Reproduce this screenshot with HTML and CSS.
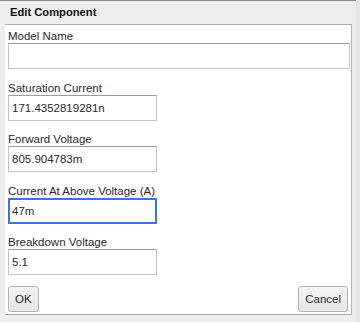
FILE: index.html
```html
<!DOCTYPE html>
<html>
<head>
<meta charset="utf-8">
<link rel="stylesheet" href="styles.css">
</head>
<body>
<div class="dialog">
  <div class="title">Edit Component</div>
  <div class="panel">
    <div class="field">
      <div class="label">Model Name</div>
      <input class="input wide" type="text" value="">
    </div>
    <div class="field">
      <div class="label">Saturation Current</div>
      <input class="input" type="text" value="171.4352819281n">
    </div>
    <div class="field">
      <div class="label">Forward Voltage</div>
      <input class="input" type="text" value="805.904783m">
    </div>
    <div class="field">
      <div class="label">Current At Above Voltage (A)</div>
      <input class="input focused" type="text" value="47m">
    </div>
    <div class="field">
      <div class="label">Breakdown Voltage</div>
      <input class="input" type="text" value="5.1">
    </div>
    <div class="buttons">
      <button class="btn" type="button">OK</button>
      <button class="btn" type="button">Cancel</button>
    </div>
  </div>
</div>
</body>
</html>
```

FILE: styles.css
```css
html, body {
  margin: 0;
  padding: 0;
}
body {
  width: 360px;
  height: 322px;
  background: #e6e6e6;
  font-family: "Liberation Sans", Arial, sans-serif;
  font-size: 11.5px;
  color: #2a2a2a;
  overflow: hidden;
}
.dialog {
  width: 356px;
  height: 321px;
  background: #eeeeee;
  border-top: 1px solid #8e8e8e;
}
.title {
  height: 23px;
  line-height: 23px;
  padding-left: 10px;
  font-size: 11.2px;
  font-weight: bold;
  color: #111;
}
.panel {
  margin-left: 5px;
  width: 347px;
  background: #ffffff;
  border-top: 1px solid #a9a9a9;
  border-right: 1px solid #b4b4b4;
  border-bottom: 1px solid #a9a9a9;
  padding: 4px 3px 2px 3px;
  box-sizing: border-box;
  display: flex;
  flex-direction: column;
  gap: 11.5px;
}
.field {
  display: flex;
  flex-direction: column;
  align-items: flex-start;
}
.label {
  line-height: 14px;
  height: 14px;
  color: #2a2a2a;
}
.input {
  box-sizing: border-box;
  width: 149px;
  height: 26px;
  margin: 0;
  padding: 0 3px;
  border: 1px solid #c4c4c4;
  border-top-color: #9c9c9c;
  border-radius: 0;
  background: #fff;
  font-family: "Liberation Sans", Arial, sans-serif;
  font-size: 11.5px;
  color: #2a2a2a;
  outline: none;
}
.input.wide {
  width: 342px;
}
.input.focused {
  border: 2px solid #3d72d9;
  padding: 0 2px;
}
.buttons {
  display: flex;
  justify-content: space-between;
  margin-top: -0.5px;
}
.btn {
  box-sizing: border-box;
  height: 26px;
  margin: 0;
  padding: 0 6px;
  border: 1px solid #b3b3b3;
  border-radius: 3px;
  background: linear-gradient(#f4f4f4, #e6e6e6);
  font-family: "Liberation Sans", Arial, sans-serif;
  font-size: 11.5px;
  color: #2a2a2a;
}
```
